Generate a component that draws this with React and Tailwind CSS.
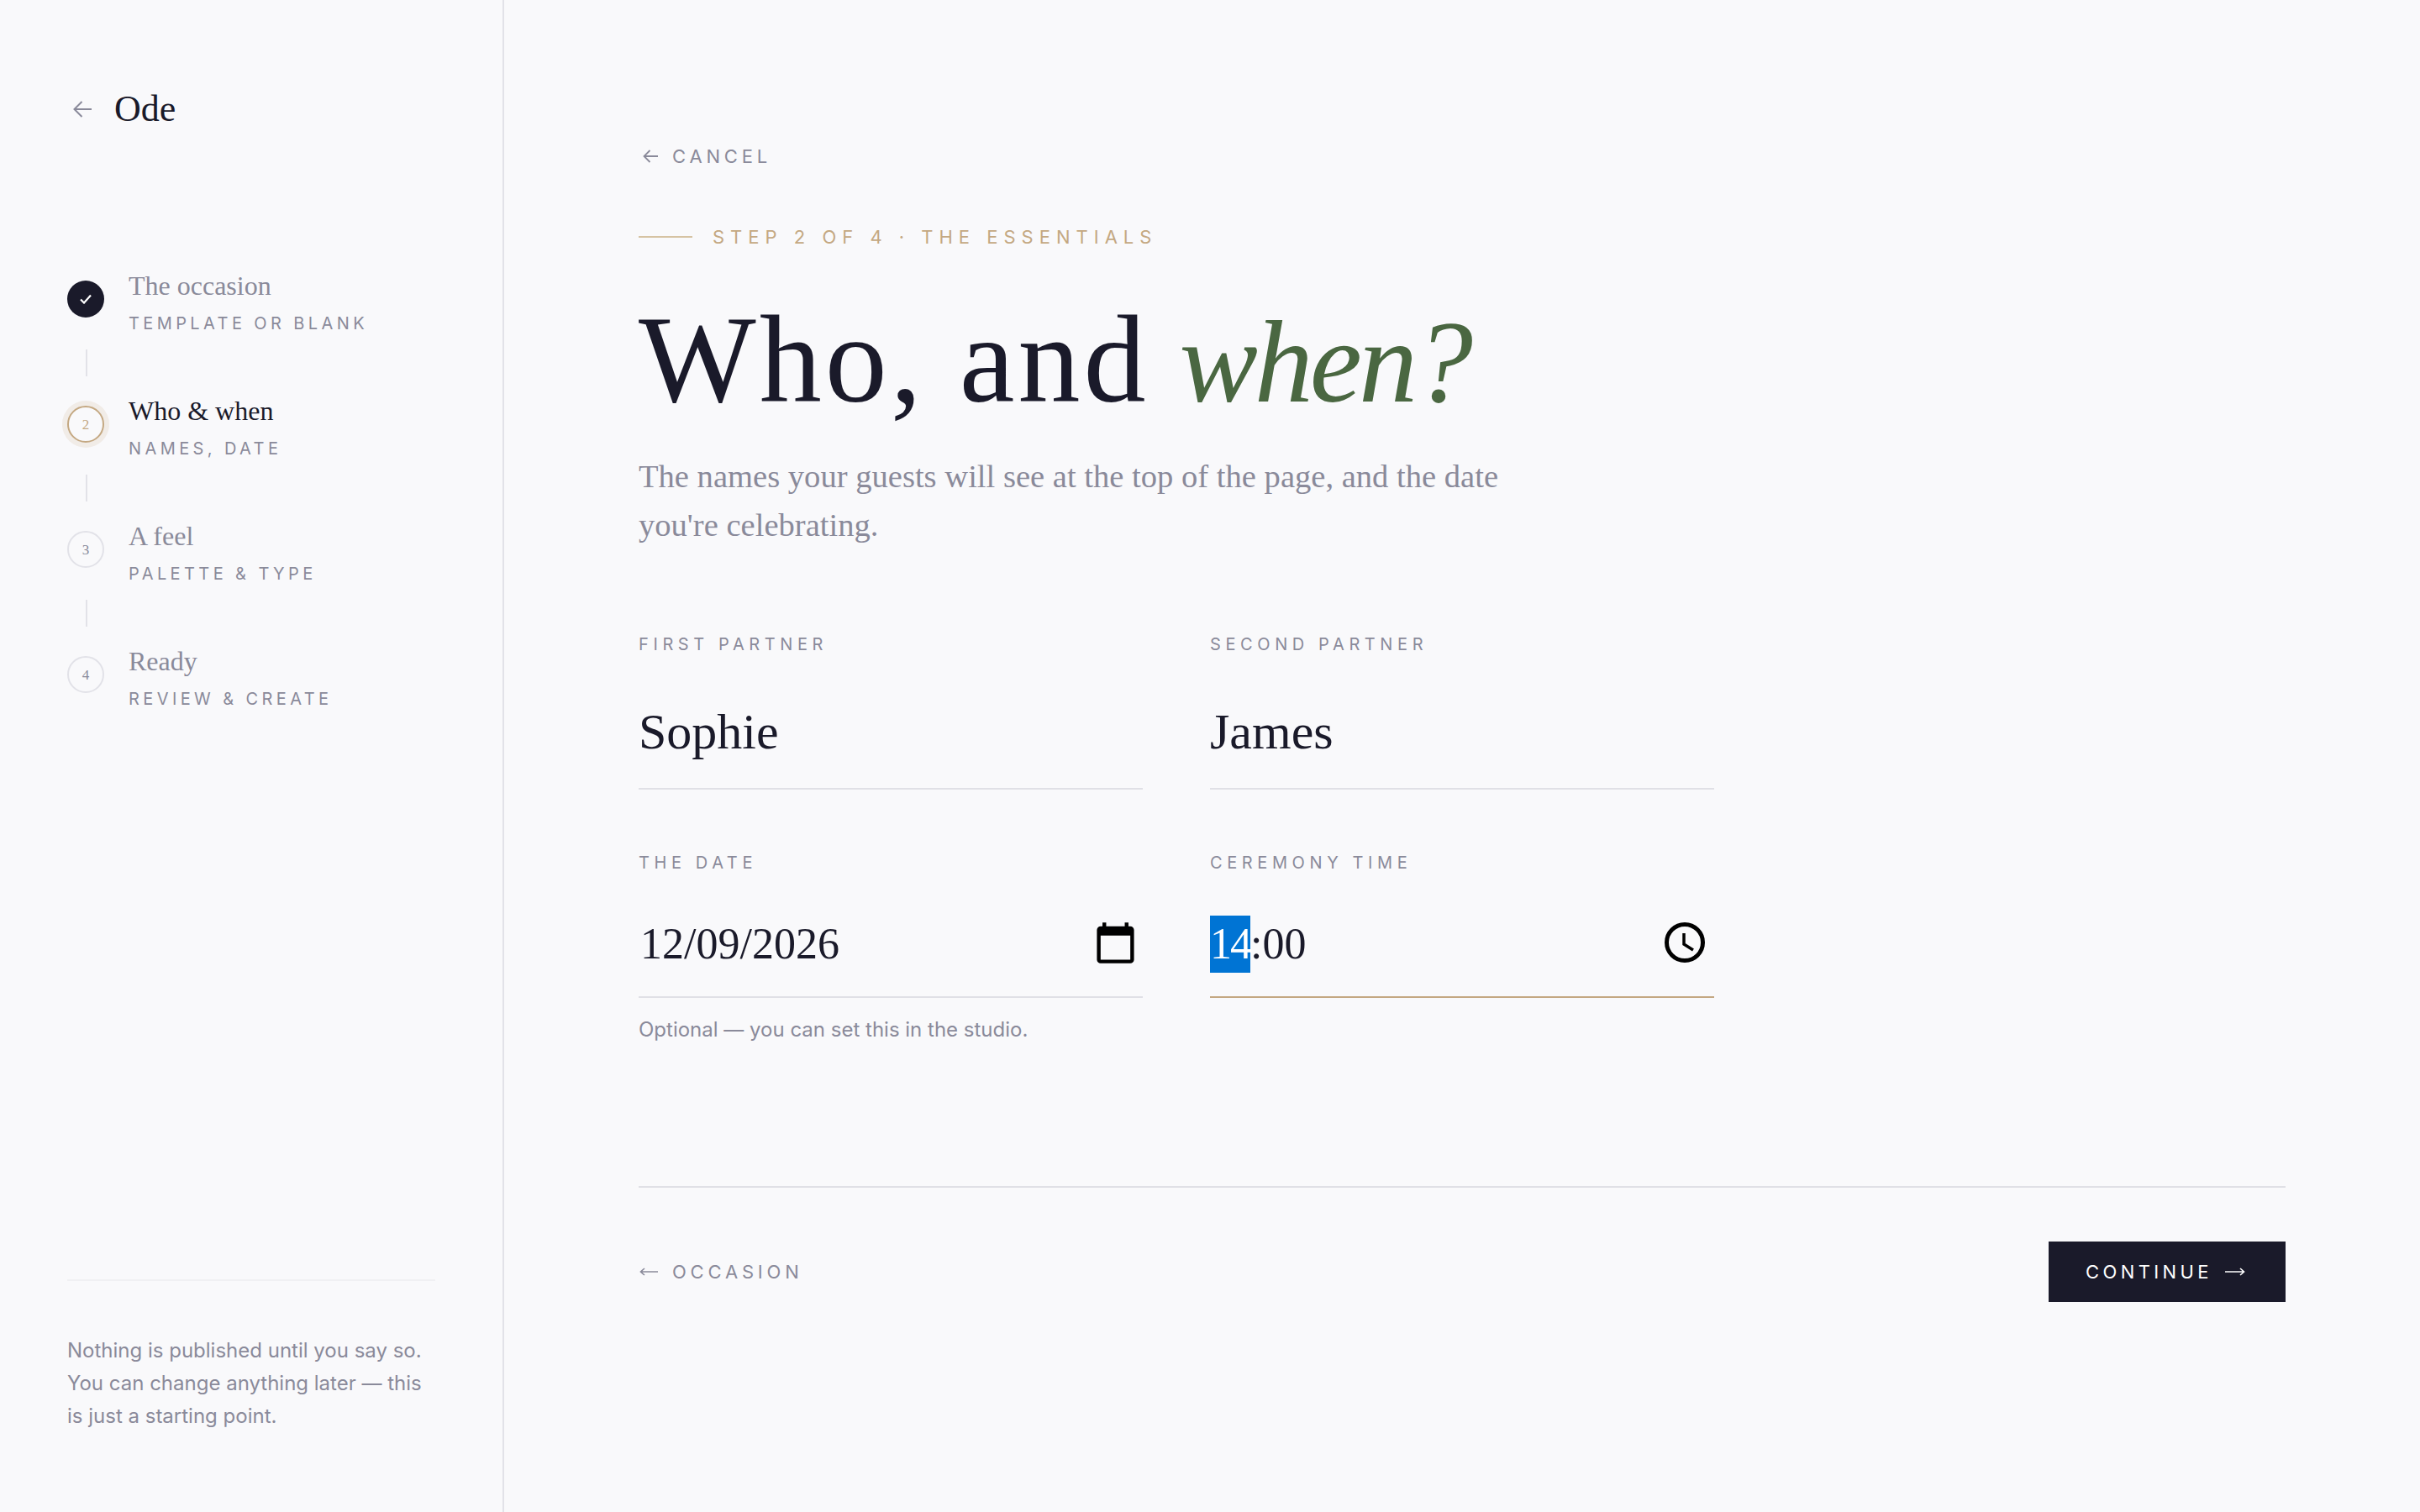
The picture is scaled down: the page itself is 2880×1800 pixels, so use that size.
const serif = "font-['Liberation_Serif',serif]"

const steps = [
  { n: 1, title: "The occasion", sub: "Template or blank", state: "done" },
  { n: 2, title: "Who & when", sub: "Names, date", state: "active" },
  { n: 3, title: "A feel", sub: "Palette & type", state: "todo" },
  { n: 4, title: "Ready", sub: "Review & create", state: "todo" },
]

const StepDot = ({ step }) => {
  if (step.state === "done") {
    return (
      <div className="mt-[14px] flex size-[44px] shrink-0 items-center justify-center rounded-full bg-[#1a1a2a]">
        <svg viewBox="0 0 14 12" fill="none" stroke="#ffffff" strokeWidth="2.2" className="h-[12px] w-[14px]">
          <path d="M1 6.5 5 10.5 13 1.5" />
        </svg>
      </div>
    )
  }
  if (step.state === "active") {
    return (
      <div
        className={`mt-[14px] flex size-[44px] shrink-0 items-center justify-center rounded-full border-2 border-[#c4a882] pt-[2px] text-[17px] text-[#c4a882] shadow-[0_0_0_6px_rgba(196,168,130,0.16)] ${serif}`}
      >
        {step.n}
      </div>
    )
  }
  return (
    <div
      className={`mt-[14px] flex size-[44px] shrink-0 items-center justify-center rounded-full border-2 border-[#e2e2e8] pt-[2px] text-[17px] text-[#8a8a9a] ${serif}`}
    >
      {step.n}
    </div>
  )
}

const Sidebar = () => (
  <aside className="flex h-[1800px] w-[600px] shrink-0 flex-col border-r-2 border-[#e2e2e8] pl-[80px] pr-[80px] pb-[95px] pt-[100px]">
    <div className="flex h-[60px] items-center gap-[27px]">
      <svg viewBox="0 0 22 20" fill="none" stroke="#8a8a9a" strokeWidth="2" className="ml-[7px] h-[20px] w-[22px]">
        <path d="M22 10H1.5M10.5 1 1.5 10l9 9" />
      </svg>
      <span className={`text-[44px] text-[#1a1a2a] ${serif}`}>Ode</span>
    </div>

    <div className="mt-[160px]">
      {steps.map((step, i) => (
        <div key={step.n}>
          <div className="flex gap-[29px]">
            <StepDot step={step} />
            <div>
              <div className={`text-[32px] leading-[40px] ${serif} ${step.state === "active" ? "text-[#1a1a2a]" : "text-[#8a8a9a]"}`}>
                {step.title}
              </div>
              <div className="mt-[11px] text-[20px] uppercase leading-[28px] tracking-[0.22em] text-[#8a8a9a]">{step.sub}</div>
            </div>
          </div>
          {i < steps.length - 1 && <div className="ml-[22px] mb-[21px] mt-[17px] h-[32px] w-[2px] bg-[#e2e2e8]" />}
        </div>
      ))}
    </div>

    <div className="mt-auto border-t-2 border-[#f0f0f3] pt-[63px] text-[24px] leading-[39px] text-[#8a8a9a]">
      Nothing is published until you say so. You can change anything later — this is just a starting point.
    </div>
  </aside>
)

const Field = ({ label, children, focused, valueClass }) => (
  <div>
    <div className="text-[20px] uppercase leading-[28px] tracking-[0.28em] text-[#8a8a9a]">{label}</div>
    <div className={`border-b-2 ${focused ? "border-[#c4a882]" : "border-[#e0e0e6]"} ${valueClass}`}>{children}</div>
  </div>
)

const Main = () => (
  <main className="min-w-0 flex-1 pl-[160px] pr-[160px] pt-[171px]">
    <div className="flex h-[30px] items-center gap-[17px] text-[22px] uppercase tracking-[4.8px] text-[#8a8a9a]">
      <svg viewBox="0 0 18 16" fill="none" stroke="#8a8a9a" strokeWidth="1.8" className="ml-[5px] h-[16px] w-[18px]">
        <path d="M18 8H1.5M8.5 1 1.5 8l7 7" />
      </svg>
      <span>Cancel</span>
    </div>

    <div className="mt-[66px] flex h-[30px] items-center gap-[24px]">
      <div className="h-[2px] w-[64px] bg-[#d6c3a3]" />
      <div className="text-[22px] uppercase tracking-[7px] text-[#c4a882]">Step 2 of 4 · The essentials</div>
    </div>

    <h1 className={`mt-[57px] h-[148px] text-[148px] font-normal leading-[148px] tracking-[4px] text-[#1a1a2a] ${serif}`}>
      Who, and <em className="-ml-[5px] text-[140px] tracking-[-4px] text-[#4a6741]">when?</em>
    </h1>

    <p className={`mt-[36px] max-w-[1040px] text-[38.6px] leading-[58px] text-[#8a8a9a] ${serif}`}>
      The names your guests will see at the top of the page, and the date you're celebrating.
    </p>

    <div className="mt-[99px] grid w-[1280px] grid-cols-2 gap-x-[80px] gap-y-[73px]">
      <Field label="First partner" valueClass={`mt-[54px] pb-[31px] text-[60px] leading-[72px] text-[#1a1a2a] ${serif}`}>
        Sophie
      </Field>
      <Field label="Second partner" valueClass={`mt-[54px] pb-[31px] text-[60px] leading-[72px] text-[#1a1a2a] ${serif}`}>
        James
      </Field>
      <div>
        <Field
          label="The date"
          valueClass={`mt-[49px] flex items-start justify-between pb-[28px] text-[52px] leading-[68px] text-[#1a1a2a] ${serif}`}
        >
          <span className="ml-[2px]">12/09/2026</span>
          <svg viewBox="0 0 24 24" fill="#000000" className="mr-[6px] mt-[6px] size-[53px]">
            <path d="M20 3h-1V1h-2v2H7V1H5v2H4c-1.1 0-2 .9-2 2v16c0 1.1.9 2 2 2h16c1.1 0 2-.9 2-2V5c0-1.1-.9-2-2-2zm0 18H4V8h16v13z" />
          </svg>
        </Field>
        <div className="mt-[20px] text-[24px] leading-[36px] text-[#8a8a9a]">Optional — you can set this in the studio.</div>
      </div>
      <Field
        label="Ceremony time"
        focused
        valueClass={`mt-[49px] flex items-start justify-between pb-[28px] text-[52px] leading-[68px] text-[#1a1a2a] ${serif}`}
      >
        <span>
          <span className="inline-block w-[48px] bg-[#0074d4] tracking-[-2px] text-white">14</span>:00
        </span>
        <svg viewBox="0 0 48 48" fill="none" stroke="#000000" className="mr-[11px] mt-[8px] size-[48px]">
          <circle cx="24" cy="24" r="21.5" strokeWidth="5" />
          <path d="M23 13V26L34 33" strokeWidth="3.5" />
        </svg>
      </Field>
    </div>

    <div className="mt-[168px] flex items-center justify-between border-t-2 border-[#e0e0e6] pt-[64px]">
      <div className="flex items-center gap-[17px] text-[22px] uppercase tracking-[4.8px] text-[#8a8a9a]">
        <svg viewBox="0 0 22 10" fill="none" stroke="#8a8a9a" strokeWidth="1.6" className="ml-[1px] h-[10px] w-[22px]">
          <path d="M22 5H1.5M6 1 1.5 5 6 9" />
        </svg>
        <span>Occasion</span>
      </div>
      <button className="flex h-[72px] w-[282px] items-center gap-[15px] bg-[#1a1a2a] pl-[44px] text-[22px] uppercase tracking-[4.4px] text-white">
        <span>Continue</span>
        <svg viewBox="0 0 24 10" fill="none" stroke="#ffffff" strokeWidth="1.6" className="h-[10px] w-[24px]">
          <path d="M0 5H22.5M18 1 22.5 5 18 9" />
        </svg>
      </button>
    </div>
  </main>
)

export default function App() {
  return (
    <div className="flex h-[1800px] w-[2880px] overflow-hidden bg-[#f9f9fb] font-[Inter,sans-serif]">
      <Sidebar />
      <Main />
    </div>
  )
}
